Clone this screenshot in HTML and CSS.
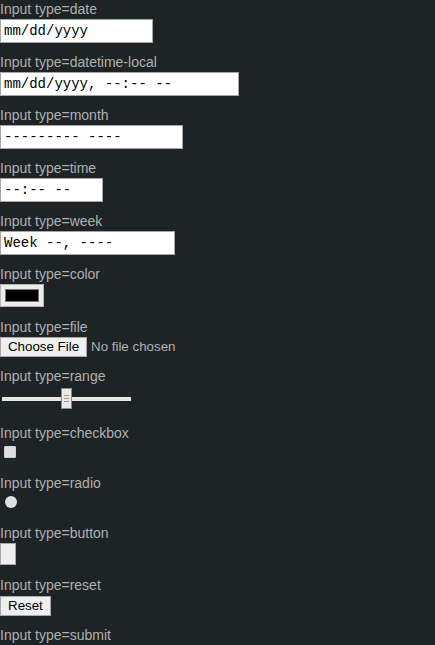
FILE: index.html
```html
<!DOCTYPE html>
<html>
<head>
<meta charset="utf-8">
<link rel="stylesheet" href="styles.css">
</head>
<body>
<div class="list">
  <div class="item it-text">
    <div class="lbl">Input type=date</div>
    <div class="field w-date">mm/dd/yyyy</div>
  </div>
  <div class="item it-text">
    <div class="lbl">Input type=datetime-local</div>
    <div class="field w-dtl">mm/dd/yyyy, --:-- --</div>
  </div>
  <div class="item it-text">
    <div class="lbl">Input type=month</div>
    <div class="field w-month">--------- ----</div>
  </div>
  <div class="item it-text">
    <div class="lbl">Input type=time</div>
    <div class="field w-time">--:-- --</div>
  </div>
  <div class="item it-text">
    <div class="lbl">Input type=week</div>
    <div class="field w-week">Week --, ----</div>
  </div>
  <div class="item it-color">
    <div class="lbl">Input type=color</div>
    <div class="color"><span class="swatch"></span></div>
  </div>
  <div class="item it-file">
    <div class="lbl">Input type=file</div>
    <div class="filerow"><span class="btn btn-file">Choose File</span><span class="nofile">No file chosen</span></div>
  </div>
  <div class="item it-range">
    <div class="lbl">Input type=range</div>
    <div class="range">
      <span class="track"></span>
      <span class="thumb"><i></i><i></i><i></i></span>
    </div>
  </div>
  <div class="item it-check">
    <div class="lbl">Input type=checkbox</div>
    <div class="check"></div>
  </div>
  <div class="item it-radio">
    <div class="lbl">Input type=radio</div>
    <div class="radio"></div>
  </div>
  <div class="item it-button">
    <div class="lbl">Input type=button</div>
    <div class="btn btn-empty"></div>
  </div>
  <div class="item it-reset">
    <div class="lbl">Input type=reset</div>
    <div class="btn btn-reset">Reset</div>
  </div>
  <div class="item it-submit">
    <div class="lbl">Input type=submit</div>
    <div class="btn btn-reset">Submit</div>
  </div>
</div>
</body>
</html>
```
FILE: styles.css
```css
html, body {
  margin: 0;
  padding: 0;
  background: #1e2326;
}
body {
  font-family: "Liberation Sans", Arial, sans-serif;
  font-size: 14px;
  color: #b0b0b0;
}
.list {
  display: flex;
  flex-direction: column;
  align-items: flex-start;
}
.item {
  display: flex;
  flex-direction: column;
  align-items: flex-start;
}
.lbl {
  height: 18px;
  line-height: 18px;
  white-space: nowrap;
}

/* text-like fields */
.it-text { margin-bottom: 10px; }
.field {
  box-sizing: border-box;
  margin-top: 1px;
  height: 24px;
  border: 1px solid #a6a6a6;
  background: #ffffff;
  color: #000000;
  font-family: "Liberation Mono", monospace;
  font-size: 14px;
  line-height: 22px;
  padding-left: 3px;
  white-space: pre;
}
.w-date { width: 153px; }
.w-dtl { width: 239px; }
.w-month { width: 183px; }
.w-time { width: 103px; }
.w-week { width: 175px; }

/* color */
.it-color { margin-bottom: 11px; }
.color {
  box-sizing: border-box;
  margin-top: 1px;
  width: 44px;
  height: 23px;
  background: #ececec;
  border: 1px solid #b4b4b4;
  display: flex;
  align-items: center;
  justify-content: center;
}
.swatch {
  box-sizing: border-box;
  width: 34px;
  height: 13px;
  background: #000;
  border: 1px solid #777;
}

/* buttons */
.btn {
  box-sizing: border-box;
  background: #efefef;
  border: 1px solid #a8a8a8;
  color: #000;
  font-size: 13.333px;
  line-height: 18px;
  white-space: nowrap;
}
.it-file { margin-bottom: 10px; }
.filerow {
  margin-top: 1px;
  display: flex;
  align-items: center;
  height: 20px;
}
.btn-file {
  width: 87px;
  height: 20px;
  text-align: center;
}
.nofile {
  margin-left: 4px;
  font-size: 13.333px;
  line-height: 20px;
}

/* range */
.it-range { margin-bottom: 15px; }
.range {
  position: relative;
  margin-top: 3px;
  width: 133px;
  height: 21px;
  display: flex;
  align-items: center;
}
.track {
  display: block;
  margin-left: 2px;
  width: 129px;
  height: 4px;
  background: #e8e4df;
}
.thumb {
  position: absolute;
  left: 61px;
  top: 0;
  box-sizing: border-box;
  width: 11px;
  height: 21px;
  background: #ece9e5;
  border: 1px solid #8c8c8c;
  display: flex;
  flex-direction: column;
  align-items: center;
  justify-content: center;
  gap: 2px;
}
.thumb i {
  display: block;
  width: 5px;
  height: 1px;
  background: #9a9a9a;
}

/* checkbox / radio */
.it-check { margin-bottom: 16px; }
.check {
  box-sizing: border-box;
  margin-top: 4px;
  margin-left: 4px;
  width: 12px;
  height: 12px;
  background: #dedede;
  border: 1px solid #cfcfcf;
  border-radius: 1px;
}
.it-radio { margin-bottom: 16px; }
.radio {
  box-sizing: border-box;
  margin-top: 4px;
  margin-left: 5px;
  width: 12px;
  height: 12px;
  border-radius: 50%;
  background: #e0e0e0;
}

/* button / reset */
.it-button { margin-bottom: 11px; }
.btn-empty {
  margin-top: 1px;
  width: 16px;
  height: 22px;
}
.it-reset { margin-bottom: 10px; }
.btn-reset {
  margin-top: 2px;
  height: 20px;
  padding: 0 7px;
}
```
